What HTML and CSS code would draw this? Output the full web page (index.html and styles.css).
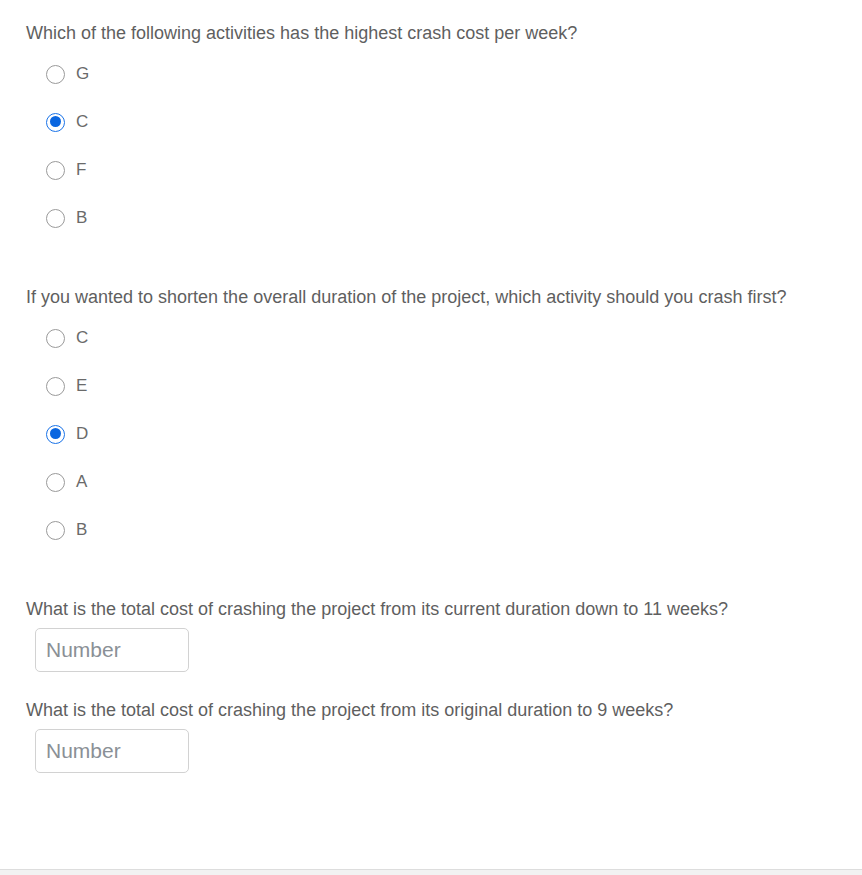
FILE: index.html
```html
<!DOCTYPE html>
<html>
<head>
<meta charset="utf-8">
<link rel="stylesheet" href="styles.css">
</head>
<body>
<main class="quiz">
  <section class="q q-first">
    <p class="q-text">Which of the following activities has the highest crash cost per week?</p>
    <div class="options">
      <label class="opt"><span class="radio"></span><span class="lbl">G</span></label>
      <label class="opt"><span class="radio checked"></span><span class="lbl">C</span></label>
      <label class="opt"><span class="radio"></span><span class="lbl">F</span></label>
      <label class="opt"><span class="radio"></span><span class="lbl">B</span></label>
    </div>
  </section>
  <section class="q">
    <p class="q-text">If you wanted to shorten the overall duration of the project, which activity should you crash first?</p>
    <div class="options">
      <label class="opt"><span class="radio"></span><span class="lbl">C</span></label>
      <label class="opt"><span class="radio"></span><span class="lbl">E</span></label>
      <label class="opt"><span class="radio checked"></span><span class="lbl">D</span></label>
      <label class="opt"><span class="radio"></span><span class="lbl">A</span></label>
      <label class="opt"><span class="radio"></span><span class="lbl">B</span></label>
    </div>
  </section>
  <section class="q">
    <p class="q-text">What is the total cost of crashing the project from its current duration down to 11 weeks?</p>
    <input class="num" type="text" placeholder="Number">
  </section>
  <section class="q q-tight">
    <p class="q-text">What is the total cost of crashing the project from its original duration to 9 weeks?</p>
    <input class="num" type="text" placeholder="Number">
  </section>
</main>
<footer class="foot"></footer>
</body>
</html>
```
FILE: styles.css
```css
html, body {
  margin: 0;
  padding: 0;
  background: #fff;
}
body {
  font-family: "Liberation Sans", Arial, sans-serif;
  color: #5f5f5f;
}
.quiz {
  padding: 23px 0 0 26px;
  height: 847px;
  box-sizing: border-box;
}
.q {
  margin-top: 45px;
}
.q-first {
  margin-top: 0;
}
.q-tight {
  margin-top: 28px;
}
.q-text {
  margin: 0;
  font-size: 18px;
  line-height: 20px;
  color: #5f5f5f;
}
.options {
  margin-top: 7px;
  display: flex;
  flex-direction: column;
}
.opt {
  height: 48px;
  display: flex;
  align-items: center;
  padding-left: 20px;
}
.radio {
  width: 19px;
  height: 19px;
  box-sizing: border-box;
  border: 1px solid #9a9a9a;
  border-radius: 50%;
  background: #fff;
  position: relative;
}
.radio.checked {
  border: 1.5px solid #1a73e8;
}
.radio.checked::after {
  content: "";
  position: absolute;
  left: 2.5px;
  top: 2.5px;
  width: 11px;
  height: 11px;
  border-radius: 50%;
  background: #0a66e0;
}
.lbl {
  margin-left: 11px;
  font-size: 17px;
  color: #6a6a6a;
}
.num {
  display: block;
  margin: 9px 0 0 9px;
  width: 154px;
  height: 44px;
  box-sizing: border-box;
  border: 1px solid #d2d2d2;
  border-radius: 5px;
  padding: 0 10px;
  font-family: "Liberation Sans", Arial, sans-serif;
  font-size: 21px;
  color: #555;
  outline: none;
}
.num::placeholder {
  color: #8a9096;
}
.foot {
  height: 6px;
  margin-top: 22px;
  border-top: 1px solid #ddd;
  background: #f2f2f2;
}
```
